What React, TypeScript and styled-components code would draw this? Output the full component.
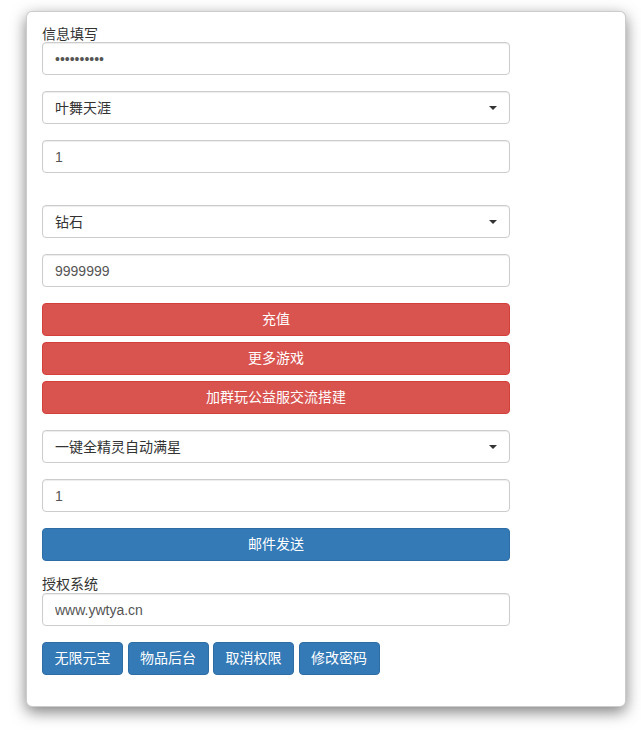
import styled, { createGlobalStyle } from 'styled-components'

const GlobalStyle = createGlobalStyle`
  html, body {
    margin: 0;
    padding: 0;
    background: #fff;
  }

  body {
    font-family: 'Liberation Sans', 'Noto Sans CJK SC', sans-serif;
    font-size: 14px;
    line-height: 20px;
    color: #333;
  }

  * {
    box-sizing: border-box;
  }
`

const Page = styled.div`
  padding: 11px 0 26px 26px;
`

const Card = styled.div`
  width: 600px;
  padding: 15px 15px 31px;
  background: #fff;
  border: 1px solid rgba(0, 0, 0, 0.2);
  border-radius: 6px;
  box-shadow: 0 5px 15px rgba(0, 0, 0, 0.5);
`

const Form = styled.div`
  width: 468px;
  display: flex;
  flex-direction: column;
`

const Label = styled.label<{ $gap?: number }>`
  display: block;
  height: 15px;
  margin-top: ${({ $gap }) => $gap ?? 0}px;
  font-size: 14px;
  line-height: 15px;
  color: #333;
`

const Field = styled.input<{ $gap?: number }>`
  display: block;
  width: 100%;
  height: 33px;
  margin: ${({ $gap }) => $gap ?? 0}px 0 0;
  padding: 1px 12px 0;
  font: inherit;
  font-size: 14px;
  line-height: 30px;
  color: #555;
  background: #fff;
  border: 1px solid #ccc;
  border-radius: 4px;
  box-shadow: inset 0 1px 1px rgba(0, 0, 0, 0.075);
  outline: none;
`

const SelectWrap = styled.div<{ $gap?: number }>`
  position: relative;
  height: 33px;
  margin-top: ${({ $gap }) => $gap ?? 0}px;

  &::after {
    content: '';
    position: absolute;
    right: 13px;
    top: 15px;
    border-left: 4px solid transparent;
    border-right: 4px solid transparent;
    border-top: 4px solid #333;
    pointer-events: none;
  }
`

const Select = styled.select`
  display: block;
  width: 100%;
  height: 33px;
  margin: 0;
  padding: 1px 30px 0 12px;
  font: inherit;
  font-size: 14px;
  line-height: 30px;
  color: #333;
  background: #fff;
  border: 1px solid #ccc;
  border-radius: 4px;
  box-shadow: inset 0 1px 1px rgba(0, 0, 0, 0.075);
  appearance: none;
  outline: none;
`

const BlockButton = styled.button<{ $tone: 'danger' | 'primary'; $gap?: number }>`
  display: block;
  width: 100%;
  height: 33px;
  margin: ${({ $gap }) => $gap ?? 0}px 0 0;
  padding: 0 12px;
  font: inherit;
  font-size: 14px;
  line-height: 31px;
  color: #fff;
  text-align: center;
  border-radius: 4px;
  cursor: pointer;
  background: ${({ $tone }) => ($tone === 'danger' ? '#d9534f' : '#337ab7')};
  border: 1px solid ${({ $tone }) => ($tone === 'danger' ? '#d43f3a' : '#2e6da4')};
`

const ButtonRow = styled.div`
  display: flex;
  gap: 4.5px;
  margin-top: 16px;
`

const SmallButton = styled.button`
  height: 33px;
  margin: 0;
  padding: 0 11.5px;
  font: inherit;
  font-size: 14px;
  line-height: 31px;
  color: #fff;
  background: #337ab7;
  border: 1px solid #2e6da4;
  border-radius: 4px;
  cursor: pointer;
  white-space: nowrap;
`

const roles = ['叶舞天涯']
const items = ['钻石']
const mails = ['一键全精灵自动满星']
const actions = ['无限元宝', '物品后台', '取消权限', '修改密码']

export default function App() {
  return (
    <>
      <GlobalStyle />
      <Page>
        <Card>
          <Form>
            <Label>信息填写</Label>
            <Field type="password" defaultValue="1234567890" />

            <SelectWrap $gap={16}>
              <Select defaultValue={roles[0]}>
                {roles.map(role => (
                  <option key={role}>{role}</option>
                ))}
              </Select>
            </SelectWrap>

            <Field $gap={16} defaultValue="1" />

            <SelectWrap $gap={32}>
              <Select defaultValue={items[0]}>
                {items.map(item => (
                  <option key={item}>{item}</option>
                ))}
              </Select>
            </SelectWrap>

            <Field $gap={16} defaultValue="9999999" />

            <BlockButton $tone="danger" $gap={16}>充值</BlockButton>
            <BlockButton $tone="danger" $gap={6}>更多游戏</BlockButton>
            <BlockButton $tone="danger" $gap={6}>加群玩公益服交流搭建</BlockButton>

            <SelectWrap $gap={16}>
              <Select defaultValue={mails[0]}>
                {mails.map(mail => (
                  <option key={mail}>{mail}</option>
                ))}
              </Select>
            </SelectWrap>

            <Field $gap={16} defaultValue="1" />

            <BlockButton $tone="primary" $gap={16}>邮件发送</BlockButton>

            <Label $gap={16}>授权系统</Label>
            <Field $gap={1} defaultValue="www.ywtya.cn" />

            <ButtonRow>
              {actions.map(action => (
                <SmallButton key={action}>{action}</SmallButton>
              ))}
            </ButtonRow>
          </Form>
        </Card>
      </Page>
    </>
  )
}
